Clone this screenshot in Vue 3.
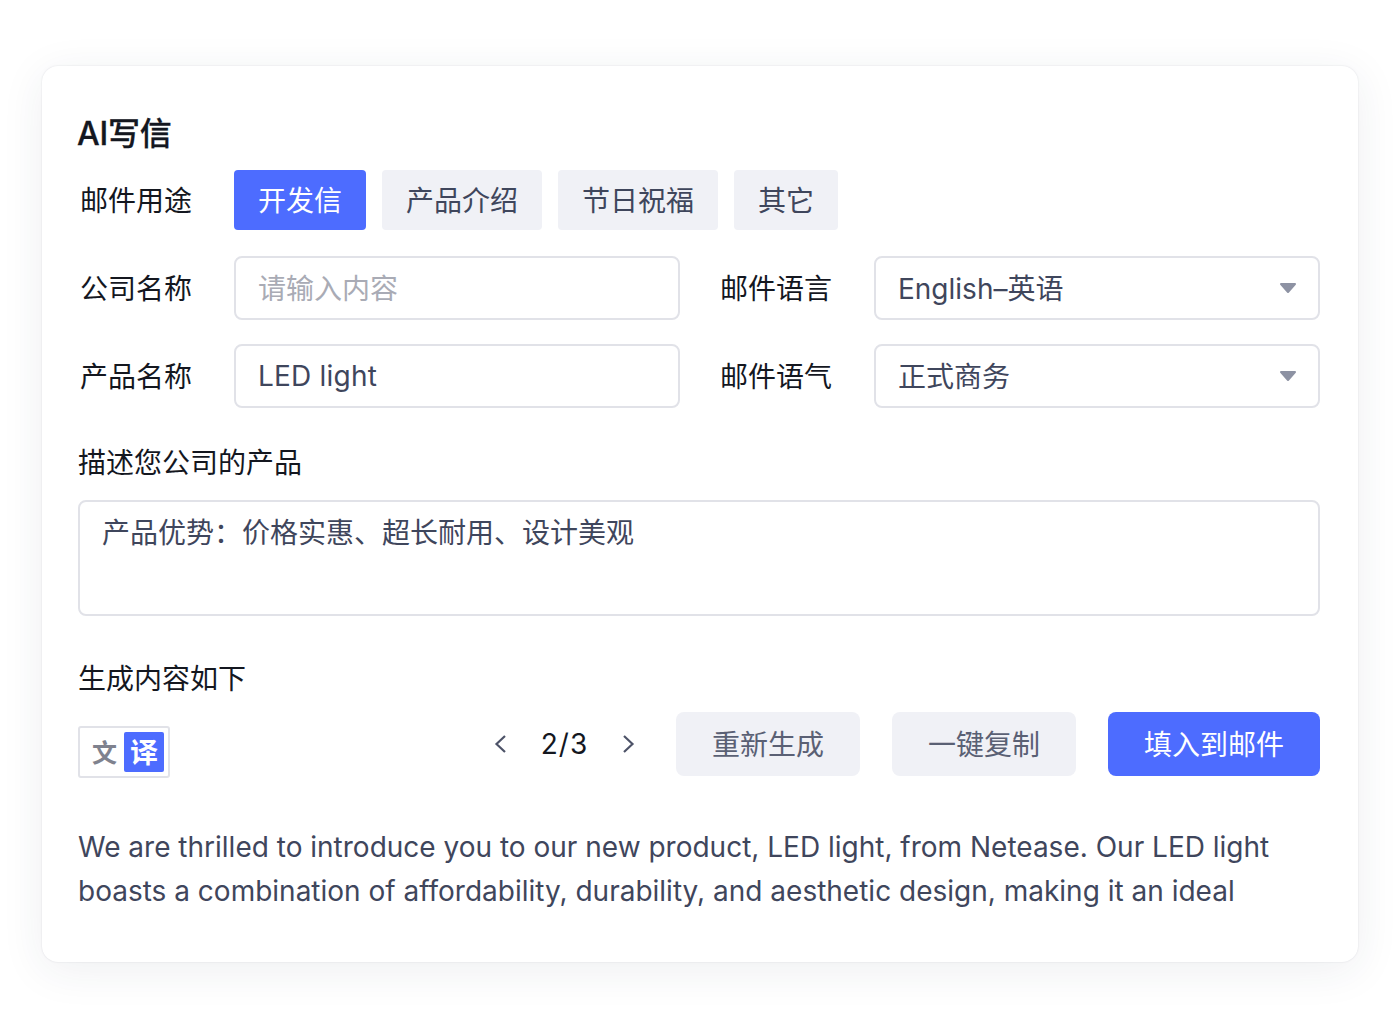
<template>
  <div class="page">
    <div class="card">
      <h2 class="title">AI写信</h2>

      <div class="row row-purpose">
        <span class="label">邮件用途</span>
        <div class="tags">
          <span v-for="(t, i) in purposes" :key="t" class="tag" :class="{ active: i === 0 }">{{ t }}</span>
        </div>
      </div>

      <div class="row row-field">
        <span class="label">公司名称</span>
        <div class="field cjk placeholder">请输入内容</div>
        <span class="label label-right">邮件语言</span>
        <div class="field cjk select">
          <span>English–英语</span>
          <svg class="caret" width="18" height="12" viewBox="0 0 18 12"><path d="M2 2h14l-7 8z" /></svg>
        </div>
      </div>

      <div class="row row-field">
        <span class="label">产品名称</span>
        <div class="field latin">LED light</div>
        <span class="label label-right">邮件语气</span>
        <div class="field cjk select">
          <span>正式商务</span>
          <svg class="caret" width="18" height="12" viewBox="0 0 18 12"><path d="M2 2h14l-7 8z" /></svg>
        </div>
      </div>

      <div class="section-label desc-label">描述您公司的产品</div>
      <div class="textarea">产品优势：价格实惠、超长耐用、设计美观</div>

      <div class="section-label result-label">生成内容如下</div>
      <div class="toolbar">
        <div class="translate">
          <span class="tr-src">文</span>
          <span class="tr-dst">译</span>
        </div>
        <div class="actions">
          <div class="pager">
            <svg class="arrow" width="14" height="20" viewBox="0 0 14 20"><path d="M12 2 3.500 10 12 18" /></svg>
            <span class="count">2/3</span>
            <svg class="arrow" width="14" height="20" viewBox="0 0 14 20"><path d="M2 2l8.500 8L2 18" /></svg>
          </div>
          <button class="btn">重新生成</button>
          <button class="btn">一键复制</button>
          <button class="btn primary">填入到邮件</button>
        </div>
      </div>

      <p class="content">We are thrilled to introduce you to our new product, LED light, from Netease. Our LED light boasts a combination of affordability, durability, and aesthetic design, making it an ideal</p>
    </div>
  </div>
</template>

<script setup>
const purposes = ['开发信', '产品介绍', '节日祝福', '其它']
</script>

<style>
body {
  background: #fff;
}
</style>

<style scoped>
.page {
  width: 1400px;
  height: 1028px;
  padding: 66px 42px 0;
  box-sizing: border-box;
  font-family: Inter, "Noto Sans CJK SC", sans-serif;
  overflow: hidden;
}

.card {
  width: 1316px;
  height: 896px;
  box-sizing: border-box;
  padding: 48px 38px 0 36px;
  background: #fff;
  border-radius: 16px;
  box-shadow: 0 0 2px rgba(40, 45, 80, 0.14), 0 8px 44px rgba(40, 45, 80, 0.08);
}

.title {
  margin: 0 0 0 -1px;
  font-size: 32px;
  line-height: 40px;
  font-weight: 500;
  letter-spacing: -0.2px;
  -webkit-text-stroke: 0.3px #14171f;
  color: #14171f;
}

.row {
  display: flex;
  align-items: center;
}

.row-purpose {
  margin-top: 16px;
}

.row-field {
  margin-top: 24px;
}

.row-purpose + .row-field {
  margin-top: 26px;
}

.label {
  width: 156px;
  flex-shrink: 0;
  padding: 0 0 2px 2px;
  box-sizing: border-box;
  font-size: 28px;
  color: #14171f;
}

.label-right {
  width: 154px;
  margin-left: 40px;
  padding-left: 0;
}

.tags {
  display: flex;
  gap: 16px;
}

.tag {
  height: 60px;
  box-sizing: border-box;
  padding: 0 24px 2px;
  display: flex;
  align-items: center;
  background: #f0f1f6;
  border-radius: 4px;
  font-size: 28px;
  color: #3f465c;
}

.tag.active {
  background: #4d6cff;
  color: #fff;
}

.field {
  width: 446px;
  height: 64px;
  box-sizing: border-box;
  padding: 0 22px;
  display: flex;
  align-items: center;
  border: 2px solid #e1e2e8;
  border-radius: 8px;
  font-size: 28px;
  color: #3f465c;
}

.field.cjk > span,
.field.placeholder {
  padding-bottom: 2px;
}

.field.latin {
  letter-spacing: 0.2px;
}

.placeholder {
  color: #a9abb5;
}

.select {
  justify-content: space-between;
}

.caret {
  margin-right: -1px;
  fill: #8d92a3;
  stroke: #8d92a3;
  stroke-width: 2;
  stroke-linejoin: round;
}

.section-label {
  font-size: 28px;
  line-height: 36px;
  color: #14171f;
}

.desc-label {
  margin-top: 37px;
}

.textarea {
  margin-top: 19px;
  height: 116px;
  box-sizing: border-box;
  padding: 11px 22px;
  border: 2px solid #e1e2e8;
  border-radius: 8px;
  font-size: 28px;
  line-height: 40px;
  color: #3f465c;
}

.result-label {
  margin-top: 45px;
}

.toolbar {
  margin-top: 15px;
  display: flex;
  justify-content: space-between;
  align-items: flex-start;
}

.translate {
  margin-top: 14px;
  width: 92px;
  height: 52px;
  box-sizing: border-box;
  padding: 4px;
  display: flex;
  align-items: center;
  justify-content: flex-end;
  gap: 7px;
  border: 2px solid #e1e2e8;
  border-radius: 3px;
}

.tr-src {
  padding-bottom: 2px;
  font-size: 25px;
  font-weight: 700;
  color: #7f828e;
}

.tr-dst {
  width: 40px;
  height: 40px;
  box-sizing: border-box;
  padding-bottom: 2px;
  display: flex;
  align-items: center;
  justify-content: center;
  background: #4d6cff;
  border-radius: 2px;
  font-size: 28px;
  font-weight: 700;
  color: #fff;
}

.actions {
  display: flex;
  align-items: center;
  gap: 32px;
}

.pager {
  display: flex;
  align-items: center;
  justify-content: space-between;
  width: 143px;
  margin-right: 8px;
  height: 64px;
  margin-top: -1px;
}

.arrow {
  fill: none;
  stroke: #4d5368;
  stroke-width: 2.2;
}

.count {
  font-size: 28px;
  letter-spacing: 1px;
  color: #14171f;
}

.btn {
  height: 64px;
  padding: 0 36px 2px;
  border: 0;
  border-radius: 8px;
  background: #f0f1f6;
  font-family: inherit;
  font-size: 28px;
  color: #5a6074;
}

.btn.primary {
  background: #4d6cff;
  color: #fff;
}

.content {
  margin: 47px 0 0;
  font-size: 28px;
  line-height: 44px;
  color: #3f465c;
}
</style>
